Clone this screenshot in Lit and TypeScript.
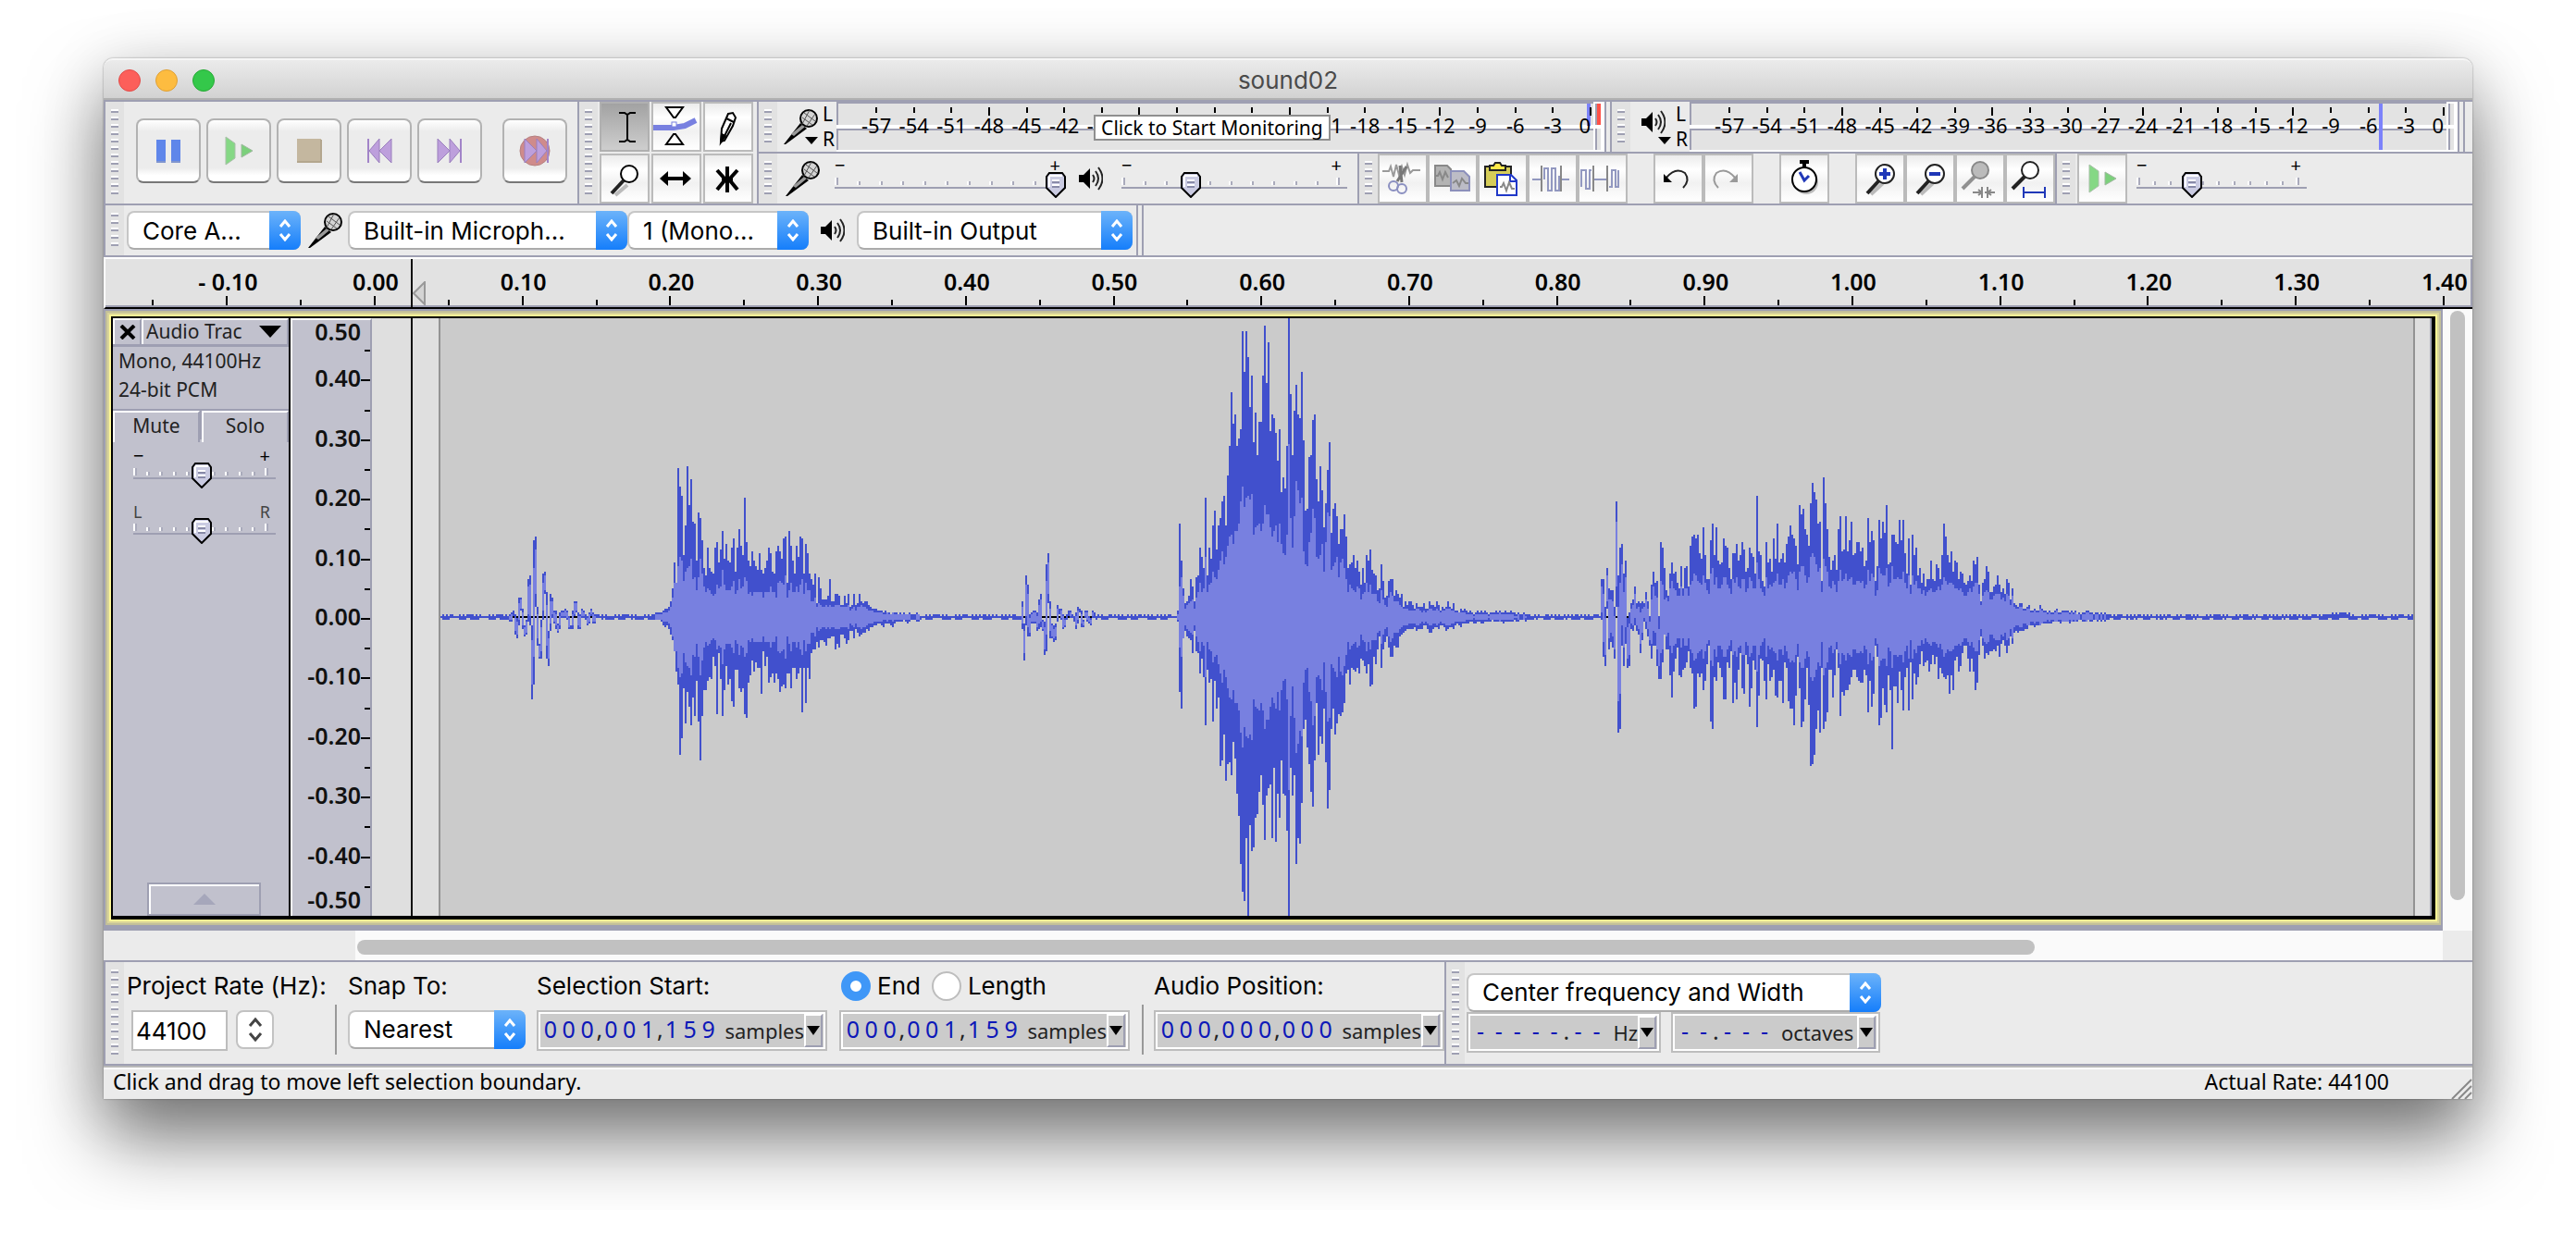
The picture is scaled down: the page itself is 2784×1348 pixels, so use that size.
import { LitElement, html, svg, css, nothing } from "lit";
import { customElement, property } from "lit/decorators.js";

/* ---------- waveform data ---------- */

type Column = { hi: number; lo: number; rhi: number; rlo: number };

const COLUMNS = 1066;
const HALF = 161;

// Oscillating transients: [highest, lowest] value of every column.
const transients: Record<number, number[][]> = {
  37: [[1,-2],[2,-2],[3,1],[1,-9],[-1,-11],[10,-4],[10,4],[4,-6],[-5,-10],[-2,-9],[20,-2],[22,-4],[-5,-44],[41,-36],[43,6],[5,-15],[-15,-22],[-2,-22],[23,-1],[24,13],[13,-22],[-8,-26],[12,-7],[10,0],[3,-3],[3,-6],[-4,-8],[2,-6],[3,0],[3,0],[4,0],[3,-1],[0,-6],[-5,-6],[3,-6],[8,1],[8,3],[2,-6],[1,-6],[4,0],[3,0],[1,-1],[0,-4],[2,-3],[4,1],[2,-3],[1,-3]],
  314: [[8,-6],[-4,-23],[22,-4],[17,-10],[1,-10],[2,-3],[3,-3],[3,-3],[2,-7],[9,-6],[12,-5],[-2,-7],[-3,-20],[28,-18],[34,8],[8,-11],[-4,-11],[-5,-13],[-4,-12],[6,-2],[4,2],[4,-1],[1,-6],[-1,-5],[1,-1],[3,1],[3,0],[1,0],[0,-2],[2,-6],[5,-3],[4,3],[3,-5],[-2,-5],[3,0],[3,-2],[0,-3],[-1,-4],[3,0],[2,0]],
  627: [[20,-1],[20,-21],[5,-26],[26,5],[15,-17],[14,-13],[14,-16],[5,-22],[62,6],[22,-62],[37,-60],[39,-15],[23,-26],[30,-14],[-1,-27],[2,-26],[7,-6],[9,-7],[16,-4],[7,-7],[8,-9],[7,-19],[8,-12],[7,-2],[13,-6],[8,-10],[0,-15],[17,-22],[24,-15],[18,-15],[19,-26],[0,-33]],
};

// Voiced passages: height above the axis, depth below it, and RMS where it is known.
const voiced: { start: number; up: number[]; down: number[]; rms?: number[] }[] = [
  {
    start: 116,
    up: [2,2,2,2,3,4,4,5,8,15,29,18,80,70,65,33,49,81,60,74,51,50,30,56,53,41,26,22,37,26,24,23,37,40,29,36,46,31,39,30,29,37,42,24,37,47,38,33,64,40,30,27,35,30,27,25,34,25,23,26,30,37,34,24,23,35,38,35,31,42,43,18,46,38,30,23,38,32,43,42,23,39,34,23,20,17,23,7,21,15,9,9,9,11,20,8,8,12,12,11,6,6,11,7,12,5,6,12,6,7,12,8,7,8,8,6,5,4,4,4,3,3,3,2,3,2,2,1,2,2,2,1,2,1,2,1,1,2,1,1,1,2,1],
    down: [1,1,1,2,4,5,4,6,9,12,18,29,36,74,65,38,57,40,48,58,43,53,34,56,77,53,39,39,34,32,33,21,26,52,19,33,53,39,26,36,33,45,48,28,28,38,40,38,52,54,35,31,23,29,24,27,27,41,18,26,21,35,32,30,35,30,33,40,37,36,38,30,30,38,27,27,33,30,27,51,27,46,27,33,19,17,17,13,16,12,12,13,15,11,11,10,10,17,14,16,9,9,11,14,12,7,7,11,6,8,10,9,8,8,6,7,5,5,4,4,3,3,4,5,3,3,3,4,5,3,2,2,2,2,1,2,3,2,1,1,1,2,2],
    rms: [1,1,1,1,2,2,2,3,5,10,18,18,27,32,30,19,24,26,27,31,20,21,14,21,31,23,16,13,15,14,12,11,12,17,15,16,25,17,14,14,14,16,19,12,14,20,15,16,21,19,12,13,11,13,13,13,13,13,10,13,13,13,16,13,13,10,18,19,18,17,22,10,14,18,13,13,16,13,17,20,12,18,14,14,8,8,10,5,7,6,5,5,6,5,6,5,5,6,6,6,5,5,5,5,6,3,4,5,3,5,5,6,5,5,4,3,3,3,2,2,2,2,2,1,1,2,1,1,2,1,1,1,1,1,1,1,1,1,1,0,0,1,1],
  },
  {
    start: 398,
    up: [3,50,30,15,7,8,11,20,16,8,21,22,37,32,26,64,22,37,31,49,57,36,49,53,62,65,49,76,92,121,104,109,92,96,101,154,132,154,140,113,130,94,110,87,105,105,130,157,126,148,100,109,107,99,84,101,67,75,69,92,162,120,87,111,125,109,107,132,95,57,58,86,87,106,109,74,62,81,68,48,61,79,94,45,58,61,54,39,47,47,55,43,26,28,29,33,26,30,24,17,26,18,33,30,36,25,23,22,14,15,28,19,10,11,19,20,20,11,14,12,10,12,5,8,6,8,8,6,4,7,5,5,5,7,4,4,8,6,6,5,8,6,3,5,4,5,8,5,4,7,3,3,2,4,3,4,3,2,3,2,1,2,3,2,3,2,3,2,1,2,2,2,3,2,3,2,2,3,2,2,3,2,2,1,2,1,1,2,1],
    down: [2,40,49,11,7,10,11,12,19,7,18,19,30,22,32,58,28,35,33,56,34,49,43,80,77,63,88,79,78,85,67,76,95,107,133,148,153,119,162,112,126,124,108,106,94,85,101,120,96,92,90,119,81,121,95,108,77,95,96,115,162,81,96,85,133,119,122,100,60,55,70,79,94,102,77,46,74,64,68,49,78,103,93,60,49,63,57,52,53,51,46,30,28,36,27,28,29,27,30,22,23,26,30,25,37,36,21,25,17,10,27,17,13,10,16,21,21,15,16,16,10,9,8,7,6,6,6,6,5,7,6,6,6,4,4,6,8,8,6,5,5,6,4,4,5,7,6,5,5,6,4,3,4,5,3,3,3,3,2,2,3,3,2,2,3,3,2,2,2,2,1,2,2,2,2,2,3,2,2,2,2,2,1,2,2,1,1,1,2],
    rms: [1,16,21,11,4,6,7,8,9,4,10,13,18,13,15,32,13,17,18,24,21,20,25,30,35,28,32,38,43,44,39,46,46,50,62,70,59,64,65,63,66,44,48,49,50,46,50,60,55,55,48,43,46,49,40,50,39,34,33,44,93,53,37,54,73,68,61,64,35,28,27,40,45,58,53,32,31,33,39,24,40,56,54,25,27,29,32,21,29,31,26,20,13,17,15,14,13,16,15,9,12,13,18,13,17,12,12,12,8,7,14,9,6,5,10,13,11,8,8,8,6,5,4,4,4,3,3,3,3,4,4,3,2,3,2,3,4,4,3,3,4,3,2,3,3,4,4,4,3,3,2,2,2,2,2,2,1,1,1,1,0,1,1,1,1,1,1,1,0,1,1,1,1,1,2,1,1,1,1,1,1,1,0,0,1,0,0,1,0],
  },
  {
    start: 659,
    up: [40,37,26,14,11,23,29,23,24,18,15,27,15,26,27,16,38,43,44,42,44,34,31,48,33,20,20,41,50,33,48,30,28,29,42,38,37,26,20,34,34,39,30,33,40,36,24,26,37,34,32,23,65,35,33,19,16,40,29,31,24,42,31,50,29,31,34,29,39,43,49,44,42,38,28,60,55,58,47,44,38,61,72,67,63,50,51,19,75,61,47,32,25,30,33,25,47,54,35,36,54,35,41,51,33,34,40,40,35,37,27,30,53,40,46,41,19,27,52,42,51,45,60,28,29,44,44,40,39,52,41,52,34,23,42,17,44,33,37,22,26,18,23,16,20,20,30,20,19,28,26,20,33,50,43,33,29,35,24,30,29,20,24,23,18,17,19,22,19,30,28,32,17,8,18,20,27,24,13,13,16,17,22,17,13,15,12,20,18,9,15,7,6,5,7,7,4,4,5,6,3,3,4,3,3,6,4,3,3,2,3,2,2,3,4,2,2,3,3,3,3,2,3,2,3,1,2,1,2,2,3,3,2,2,1,2,2,1,2,1,2,1,1],
    down: [33,24,9,17,17,31,43,29,22,16,31,32,28,27,24,18,27,30,49,48,30,32,30,39,34,25,15,56,60,32,34,24,27,32,44,44,24,27,18,46,35,44,28,19,38,41,20,25,48,38,23,28,59,42,22,23,34,44,25,34,32,28,42,43,34,34,46,24,27,45,49,49,58,42,21,38,59,56,44,27,47,80,79,74,60,50,62,27,60,56,51,28,28,43,31,17,27,53,40,42,39,39,36,32,28,28,32,34,35,35,28,31,51,34,48,41,15,21,58,54,38,47,51,31,39,71,37,37,46,29,39,50,32,27,50,24,44,30,36,32,25,18,26,24,23,29,25,20,25,21,33,27,30,32,33,31,41,31,39,23,21,29,26,19,15,15,22,29,22,29,39,35,20,10,15,22,19,20,18,18,17,18,15,21,14,12,15,19,15,10,14,8,7,8,7,7,7,6,6,4,4,4,5,4,4,4,3,3,3,3,3,3,2,2,2,2,3,2,2,2,2,3,2,2,2,2,1,1,2,2,2,1,2,2,1,1,2,1,2,1,2,1,1],
  },
];

function buildColumns(): Column[] {
  const columns: Column[] = [];
  for (let i = 0; i < COLUMNS; i++) {
    // quiet background: a thin deterministic ripple
    const h = (i * 7919 + (i >> 2) * 104729) % 97;
    const bump = i > 1018 && i < 1032 ? 1 : 0;
    columns.push({ hi: (h > 48 ? 1 : 0) + bump, lo: h % 5 > 1 ? -1 : 0, rhi: 0, rlo: 1 });
  }
  for (const [start, values] of Object.entries(transients)) {
    values.forEach(([hi, lo], i) => {
      const trim = (hi - lo) * 0.2;
      columns[Number(start) + i] = { hi, lo, rhi: Math.round(hi - trim), rlo: Math.round(lo + trim) };
    });
  }
  for (const part of voiced) {
    part.up.forEach((up, i) => {
      const down = part.down[i] ?? up;
      const rms = part.rms?.[i] ?? Math.round(Math.min(5 + 0.19 * (up + down), up * 0.7, down * 0.8 + 2));
      columns[part.start + i] = { hi: up, lo: -down, rhi: Math.min(rms, up), rlo: -Math.min(rms, down) };
    });
  }
  return columns;
}

const columns = buildColumns();
const bar = (i: number, hi: number, lo: number) => `M${i} ${HALF - hi}h1V${HALF + 1 - lo}h-1z`;
const peakPath = columns.map((c, i) => bar(i, c.hi, c.lo)).join("");
const rmsPath = columns.map((c, i) => (c.rhi >= c.rlo && c.hi - c.lo > 2 ? bar(i, c.rhi, c.rlo) : "")).join("");

/* ---------- icons ---------- */

const draw = (w: number, h: number, body: unknown) =>
  html`<svg class="icon" width=${w} height=${h} viewBox="0 0 ${w} ${h}" aria-hidden="true">${body}</svg>`;

const skipShape = svg`<path d="M3 1v26" stroke="#a284c8" stroke-width="2"/><path d="M15 1v26L4 14zM28 1v26L15 14z" fill="#bd9fdc" stroke="#9a7fbd"/>`;
const icons: Record<string, unknown> = {
  pause: draw(28, 28, svg`<path d="M1 2h10v24H1zM17 2h10v24H17z" fill="#5f86ea"/><path d="M1 26h10M17 26h10" stroke="#7f95cf" stroke-width="2"/>`),
  play: draw(30, 32, svg`<path d="M1 1l10 7v16L1 31z" fill="#85d885" stroke="#a9bfa9"/><path d="M18 9l12 7-12 7z" fill="#7bd07b" stroke="#a0b8a0"/>`),
  stop: draw(28, 28, svg`<path d="M1 1h26v26H1z" fill="#c4b79f"/><path d="M1 26h26V2" fill="none" stroke="#b3a68e" stroke-width="2"/>`),
  prev: draw(30, 28, skipShape),
  next: draw(30, 28, svg`<g transform="translate(30 0) scale(-1 1)">${skipShape}</g>`),
  record: draw(34, 34, svg`<circle cx="17" cy="17" r="16" fill="#cf8b8b" stroke="#b58080"/><g transform="translate(34 3) scale(-1 1)">${skipShape}</g>`),
  select: draw(54, 54, svg`<path d="M21 12h6l3 2 3-2h6M30 14v28M21 43h6l3-2 3 2h6" fill="none" stroke="#000" stroke-width="2"/>`),
  envelope: draw(54, 54, svg`<path d="M0 28h24l12-2 12-6" fill="none" stroke="#7880e0" stroke-width="6"/><path d="M16 6h18l-8 11h-2zM16 46h18l-8-11h-2z" fill="#fff" stroke="#000" stroke-width="2"/><rect x="22" y="22" width="5" height="5" fill="#fff" stroke="#7880e0"/>`),
  draw: draw(54, 54, svg`<path d="M27 13l5-1 3 5-3 9-9 16-4 1 1-14z" fill="#fff" stroke="#000" stroke-width="2"/><path d="M19 44l1-9 4 2zM25 18l8 4M30 23l-7 14" fill="#000" stroke="#000" stroke-width="2"/>`),
  zoom: draw(54, 54, svg`<path d="M27 32L14 43" stroke="#bbb" stroke-width="4" transform="translate(3 2)"/><circle cx="32" cy="22" r="9" fill="#fff" stroke="#000" stroke-width="2"/><path d="M26 29L13 43" stroke="#222" stroke-width="4"/>`),
  shift: draw(54, 54, svg`<path d="M9 27l9-8v6h16v-6l9 8-9 8v-6H18v6z"/>`),
  multi: draw(54, 54, svg`<path d="M26 14v28" stroke="#000" stroke-width="4"/><path d="M15 18l9 10-9 11M37 18l-9 10 9 11M20 28h12" fill="none" stroke="#000" stroke-width="4"/>`),
  mic: draw(38, 40, svg`<path d="M1 39L19 16l7 6L3 39z"/><path d="M9 28l12-10 3 2-12 10z" fill="#999"/><circle cx="28" cy="11" r="9" fill="#d4d4d4" stroke="#000" stroke-width="2"/><path d="M21 10l11 8M23 5l12 9M29 2l-8 15M35 6l-9 13" stroke="#555"/>`),
  speaker: draw(26, 26, svg`<path d="M0 9h5l7-7v22l-7-7H0z"/><path d="M15 9q3 4 0 8M18 5q6 8 0 16M21 1q9 12 0 24" fill="none" stroke="#222" stroke-width="2"/>`),
  cut: draw(54, 54, svg`<path d="M5 19h7l2-5 3 11 3-13 3 11 3-9 3 9 3-11 3 9 3-3h8" fill="none" stroke="#9a9a9a" stroke-width="2"/><path d="M31 14L21 30M24 13l2 18" stroke="#777" stroke-width="3"/><circle cx="17" cy="35" r="5" fill="none" stroke="#8a8fc0" stroke-width="2"/><circle cx="26" cy="38" r="5" fill="none" stroke="#8a8fc0" stroke-width="2"/>`),
  copy: draw(54, 54, svg`<path d="M8 13h13l4 4v18H8z" fill="#b3b3b3" stroke="#888" stroke-width="2"/><path d="M25 19h14l6 6v15H25z" fill="#bcbcc6" stroke="#8c90bb" stroke-width="2"/><path d="M8 24h3l2-4 3 8 3-8 3 6M27 32l4-3 3 6 3-8 4 5h3" fill="none" stroke="#888" stroke-width="2"/>`),
  paste: draw(54, 54, svg`<path d="M8 14h28v22H8z" fill="#d6cd58" stroke="#222" stroke-width="2"/><path d="M13 18h17v-5h-4l-2-3h-5l-2 3h-4z" fill="#ffe94a" stroke="#222" stroke-width="2"/><path d="M21 23h15l6 6v16H21z" fill="#fff" stroke="#2038c8" stroke-width="2"/><path d="M35 23v7h7" fill="none" stroke="#2038c8" stroke-width="2"/><path d="M24 36h2l2-4 3 8 3-9 3 7h3" fill="none" stroke="#888" stroke-width="2"/>`),
  trim: draw(54, 54, svg`<path d="M5 28h11M35 28h10" stroke="#9298c0" stroke-width="2"/><path d="M15 13v28M36 13v28" stroke="#888" stroke-width="2"/><path d="M18 28V16h4v24h4V16h4v24h4V24" fill="none" stroke="#9298c0" stroke-width="2"/>`),
  silence: draw(54, 54, svg`<path d="M17 28h15" stroke="#9298c0" stroke-width="2"/><path d="M17 13v28M32 13v28" stroke="#888" stroke-width="2"/><path d="M4 36V18h5v20h4V18h2M34 36h3V18h4v18h3V18" fill="none" stroke="#9298c0" stroke-width="2"/>`),
  undo: draw(54, 54, svg`<path d="M14 26q10-12 20-5 6 8-2 16" fill="none" stroke="#222" stroke-width="2"/><path d="M11 22v9h9z"/>`),
  redo: draw(54, 54, svg`<path d="M34 26q-10-12-20-5-6 8 2 16" fill="none" stroke="#999" stroke-width="2"/><path d="M37 22v9h-9z" fill="#999"/>`),
  timer: draw(54, 54, svg`<path d="M22 9h10M27 9v6" stroke="#000" stroke-width="4"/><circle cx="29" cy="31" r="13" fill="#bbb"/><circle cx="27" cy="28" r="13" fill="#fff" stroke="#000" stroke-width="2"/><path d="M22 20l5 9 5-5" fill="none" stroke="#2038b8" stroke-width="3"/>`),
  zoomIn: draw(54, 54, svg`<path d="M27 31L14 43" stroke="#bbb" stroke-width="4" transform="translate(3 1)"/><circle cx="32" cy="22" r="10" fill="#fff" stroke="#222" stroke-width="2"/><path d="M26 29L13 43" stroke="#222" stroke-width="4"/><path d="M26 22h12M32 16v12" stroke="#2038b8" stroke-width="4"/>`),
  zoomOut: draw(54, 54, svg`<path d="M27 31L14 43" stroke="#bbb" stroke-width="4" transform="translate(3 1)"/><circle cx="32" cy="22" r="10" fill="#fff" stroke="#222" stroke-width="2"/><path d="M26 29L13 43" stroke="#222" stroke-width="4"/><path d="M26 22h12" stroke="#2038b8" stroke-width="4"/>`),
  fitSelection: draw(54, 54, svg`<circle cx="27" cy="18" r="9" fill="#bbb" stroke="#888" stroke-width="2"/><path d="M21 25L8 38" stroke="#909090" stroke-width="4"/><path d="M19 42h9M32 42h11M29 36v12M35 36v12M25 39l4 3-4 3M39 39l-4 3 4 3" fill="none" stroke="#888" stroke-width="2"/>`),
  fitProject: draw(54, 54, svg`<circle cx="27" cy="18" r="9" fill="#fff" stroke="#222" stroke-width="2"/><path d="M21 25L8 38" stroke="#222" stroke-width="4"/><path d="M20 42h23M20 36v12M43 36v12" stroke="#2038b8" stroke-width="2"/>`),
};

/* ---------- shared styles ---------- */

const base = css`
  * { box-sizing: border-box; }
  button, select, input { font: inherit; color: inherit; margin: 0; }
  .icon { display: block; flex: none; }
  .ui { font-family: Inter, "Liberation Sans", sans-serif; font-size: 26px; line-height: 32px; }
  .small { font-family: "Noto Sans", "DejaVu Sans", sans-serif; font-size: 21px; line-height: 28px; }
`;

/* ---------- drop-down ---------- */

@customElement("au-combo")
class AuCombo extends LitElement {
  @property() value = "";
  @property() label = "";
  static styles = [base, css`
    :host { display: block; }
    .combo { display: grid; height: 42px; }
    select {
      grid-area: 1 / 1; appearance: none; width: 100%; height: 100%; background: #fff;
      border: 2px solid #c6c6c6; border-bottom-color: #ababab; border-radius: 8px;
      padding: 0 34px 0 15px; color: #000; font-family: Inter, "Liberation Sans", sans-serif; font-size: 26px;
    }
    .step {
      grid-area: 1 / 1; justify-self: end; width: 34px; pointer-events: none;
      border-radius: 0 8px 8px 0; background: linear-gradient(#6cb3fa, #157efb);
      display: flex; align-items: center; justify-content: center;
    }
  `];
  render() {
    return html`<div class="combo">
      <select aria-label=${this.label}><option>${this.value}</option></select>
      <span class="step">${draw(16, 24, svg`<path d="M3 8l5-6 5 6M3 16l5 6 5-6" fill="none" stroke="#fff" stroke-width="3"/>`)}</span>
    </div>`;
  }
}

/* ---------- slider ---------- */

@customElement("au-slider")
class AuSlider extends LitElement {
  @property() label = "";
  @property() low = "−";
  @property() high = "+";
  @property({ type: Number }) value = 50;
  static styles = [base, css`
    :host { display: block; }
    .slider { display: grid; grid-template-rows: 14px 28px; }
    .ends {
      display: flex; justify-content: space-between; padding-right: 6px; line-height: 14px;
      font-family: "Noto Sans", sans-serif; font-size: 20px; color: #000;
    }
    .letters { font-size: 18px; color: #444; }
    .scale {
      grid-area: 2 / 1; margin-top: 6px; height: 12px; border-bottom: 2px solid #9e9fb2;
      display: flex; justify-content: space-between; align-items: flex-end; padding: 0 8px 2px 0;
    }
    .tick { width: 4px; height: 4px; border-left: 2px solid #fff; border-right: 2px solid #a9aabb; }
    .tick:first-child, .tick:last-child { height: 8px; }
    input { grid-area: 2 / 1; appearance: none; background: none; width: 100%; height: 28px; }
    input::-webkit-slider-thumb {
      appearance: none; width: 22px; height: 28px; border: 0;
      background: url("data:image/svg+xml,%3Csvg xmlns='http://www.w3.org/2000/svg' viewBox='0 0 22 28'%3E%3Cpath d='M4 1h14l3 4v12l-10 10L1 17V5z' fill='%23cacbe2' stroke='%23000' stroke-width='2'/%3E%3Cpath d='M4 4h14M4 4v12' stroke='%23fff' stroke-width='2'/%3E%3Cpath d='M7 11h8M7 16h8' stroke='%23888aa8' stroke-width='2'/%3E%3Cpath d='M7 9h8M7 14h8' stroke='%23fff' stroke-width='2'/%3E%3C/svg%3E");
    }
  `];
  render() {
    return html`<div class="slider">
      <div class="ends ${this.low === "L" ? "letters" : ""}"><span>${this.low}</span><span>${this.high}</span></div>
      <div class="scale">${Array.from({ length: 11 }, () => html`<span class="tick"></span>`)}</div>
      <input type="range" min="0" max="100" aria-label=${this.label} .value=${String(this.value)} />
    </div>`;
  }
}

/* ---------- level meter ---------- */

@customElement("au-meter")
class AuMeter extends LitElement {
  @property() label = "";
  @property() icon = "mic";
  @property({ type: Number }) mark = 0;
  @property({ type: Boolean }) clipped = false;
  @property() tip = "";
  static styles = [base, css`
    :host { display: block; flex: 1; }
    .meter { display: flex; height: 54px; }
    .source { flex: 0 0 64px; display: flex; gap: 5px; background: none; border: 0; padding: 0 0 0 6px; }
    .glyph { display: grid; width: 38px; height: 54px; }
    .glyph > * { grid-area: 1 / 1; align-self: center; }
    .glyph .high { margin: 0 0 10px 6px; }
    .glyph .drop { align-self: end; justify-self: end; margin-bottom: 8px; }
    .sides { display: grid; font: 21px/27px "Noto Sans", sans-serif; color: #000; text-align: left; }
    .scale { flex: 1; position: relative; display: grid; grid-template-rows: 1fr 1fr; row-gap: 4px; background: #fff; border-top: 2px solid #9e9fb2; padding-bottom: 2px; }
    .channel { background: #e3e3e3; border-left: 2px solid #9e9fb2; }
    .channel + .channel { border-top: 2px solid #9e9fb2; }
    .tick { position: absolute; top: 4px; width: 2px; height: 6px; background: #000; transform: translateX(-50%); }
    .major { height: 9px; }
    .num { position: absolute; top: 9px; transform: translateX(-50%); font: 22px/28px "Noto Sans", sans-serif; color: #000; }
    .peak { position: absolute; top: 0; bottom: 2px; width: 4px; background: #7c82fb; }
    .short { bottom: 28px; }
    .last { transform: translateX(-100%); }
    .tip {
      position: absolute; left: 34%; top: 12px; border: 2px solid #8f8f8f; background: #fff; padding: 0 6px;
      font: 21px/24px "Noto Sans", sans-serif; color: #000; white-space: nowrap;
    }
    .clip { flex: 0 0 12px; display: grid; grid-template-rows: 1fr 1fr; row-gap: 4px; background: #fff; padding: 2px 4px 2px 2px; }
    .clip span { background: #e3e3e3; border-left: 2px solid #9e9fb2; }
    .clip .red { background: #ff5148; }
  `];
  render() {
    const at = (db: number) => `left:${((43 + ((db + 57) * 770) / 57) / 816) * 100}%`;
    const steps = Array.from({ length: 20 }, (_, i) => -57 + i * 3);
    // the tip hides everything between these two levels
    const hidden = (db: number) => this.tip !== "" && db > -39 && db < -21;
    return html`<div class="meter">
      <button class="source" aria-label=${this.label}>
        <span class="glyph">
          <span class=${this.icon === "speaker" ? "high" : ""}>${icons[this.icon]}</span>
          <span class="drop">${draw(14, 8, svg`<path d="M0 0h14L7 8z"/>`)}</span>
        </span>
        <span class="sides"><span>L</span><span>R</span></span>
      </button>
      <div class="scale">
        <span class="channel"></span><span class="channel"></span>
        <span class="peak ${this.mark === 0 ? "short last" : ""}" style=${at(this.mark)}></span>
        ${steps.map((db) => html`<span class="tick ${db % 12 === 0 ? "major" : ""}" style=${at(db)}></span>
          ${hidden(db) ? nothing : html`<span class="num ${db === 0 ? "last" : ""}" style=${at(db)}>${db}</span>`}`)}
        ${this.tip ? html`<span class="tip" role="tooltip">${this.tip}</span>` : nothing}
      </div>
      <div class="clip"><span class=${this.clipped ? "red" : ""}></span><span></span></div>
    </div>`;
  }
}

/* ---------- numeric field ---------- */

@customElement("au-numeric")
class AuNumeric extends LitElement {
  @property() value = "";
  @property() unit = "";
  @property() label = "";
  static styles = [base, css`
    :host { display: block; }
    .field {
      display: flex; align-items: center; height: 44px; border: 2px solid #bdbdbd; padding: 2px 3px;
      background: #cbcbcb; box-shadow: inset 0 0 0 2px #fff;
    }
    .cell { width: 20px; padding-bottom: 5px; text-align: center; color: #0d18b8; font: 25px/32px "Noto Sans", sans-serif; }
    .mark { width: 6px; color: #222; }
    .unit { margin: 0 auto 0 8px; font-size: 22px; color: #222; }
    button { width: 20px; height: 36px; padding: 0; border: 2px solid #9e9fb2; border-top-color: #fff; border-left-color: #fff; background: #cbcbcb; display: grid; place-items: center; }
  `];
  render() {
    return html`<div class="field" role="group" aria-label=${this.label}>
      ${[...this.value].map((ch) => html`<span class="cell ${ch === "," || ch === "." ? "mark" : ""}">${ch}</span>`)}
      <span class="unit small">${this.unit}</span>
      <button aria-label="Format">${draw(14, 10, svg`<path d="M0 0h14L7 10z"/>`)}</button>
    </div>`;
  }
}

/* ---------- application ---------- */

const transport = [["pause", "Pause"], ["play", "Play"], ["stop", "Stop"], ["prev", "Skip to Start"], ["next", "Skip to End"], ["record", "Record"]];
const tools = [["select", "Selection Tool"], ["envelope", "Envelope Tool"], ["draw", "Draw Tool"], ["zoom", "Zoom Tool"], ["shift", "Time Shift Tool"], ["multi", "Multi-Tool"]];
const editGroups = [
  [["cut", "Cut"], ["copy", "Copy"], ["paste", "Paste"], ["trim", "Trim"], ["silence", "Silence"]],
  [["undo", "Undo"], ["redo", "Redo"]],
  [["timer", "Sync-Lock"]],
  [["zoomIn", "Zoom In"], ["zoomOut", "Zoom Out"], ["fitSelection", "Fit Selection"], ["fitProject", "Fit Project"]],
];
const levels = ["0.50", "0.40", "0.30", "0.20", "0.10", "0.00", "-0.10", "-0.20", "-0.30", "-0.40", "-0.50"];

@customElement("app-root")
class AppRoot extends LitElement {
  static styles = [base, css`
    :host { display: block; background: #fff; padding: 63px 112px 120px; color: #000; }
    .window {
      background: #ebebeb; border-radius: 10px 10px 0 0;
      box-shadow: 0 0 2px rgba(0, 0, 0, 0.45), 0 44px 80px rgba(0, 0, 0, 0.5), 0 10px 70px rgba(0, 0, 0, 0.14);
    }
    .title {
      position: relative; display: flex; align-items: center; justify-content: center; height: 47px; color: #4a4a4a;
      border-radius: 10px 10px 0 0; border-top: 2px solid #f6f6f6; border-bottom: 2px solid #9e9fb2;
      background: linear-gradient(#ebebeb, #d2d2d2 95%, #b0b0b0 96%);
    }
    .lights { position: absolute; left: 16px; display: flex; gap: 16px; }
    .light { width: 24px; height: 24px; padding: 0; border: 1px solid #e24b48; border-radius: 50%; background: #fc5f5a; }
    .amber { background: #fdbc40; border-color: #dfa035; }
    .green { background: #34c84a; border-color: #27aa35; }

    .grip { flex: 0 0 20px; background: #e2e2e2; padding: 8px 6px; }
    .grip::before {
      content: ""; display: block; height: 100%;
      background: repeating-linear-gradient(#fff 0 2px, #9e9fb2 2px 4px, transparent 4px 8px);
    }
    .bar { display: flex; border-left: 2px solid #9e9fb2; border-bottom: 2px solid #9e9fb2; }
    .line { flex: 0 0 2px; background: #9e9fb2; }
    .sp4 { flex: 0 0 4px; }
    .sp8 { flex: 0 0 8px; }

    .transport { display: flex; align-items: center; gap: 6px; padding: 0 11px 4px 13px; height: 110px; }
    .transport button {
      width: 70px; height: 70px; padding: 0; display: grid; place-items: center; border-radius: 8px;
      border: 2px solid #b2b2b2; border-bottom-color: #777;
      background: linear-gradient(#fff, #ececec 18%, #ececec 78%, #fff 90%);
    }
    .transport button:last-child { margin-left: 16px; }
    .tools { display: grid; grid-template-columns: repeat(3, 54px); gap: 2px; padding-right: 4px; margin-left: 2px; }
    .tool {
      width: 54px; height: 54px; padding: 0; display: grid; place-items: center; overflow: hidden;
      border: 2px solid #bbb; background: linear-gradient(#ebebeb, #fff 30%, #f1f1f1 60%, #fff);
    }
    .tool .icon { margin: -2px; }
    .tool.on { background: linear-gradient(#a2a2a2, #cecece); border-color: #b0b0b0; }
    .stack { flex: 1; display: grid; grid-template-rows: 54px 54px; row-gap: 2px; background: #9e9fb2; }
    .row { display: flex; background: #ebebeb; }
    .mixer { display: flex; align-items: center; gap: 14px; padding: 0 11px 0 8px; }
    .record-gain { width: 250px; margin-left: 2px; }
    .output-gain { width: 244px; margin-left: 6px; }
    .edit { display: flex; gap: 28px; }
    .edit div { display: flex; }
    .speed { display: flex; align-items: center; gap: 10px; padding-left: 2px; }
    .speed au-slider { width: 184px; }

    .device { display: flex; align-items: center; height: 54px; padding: 0 4px 0 3px; }
    .device .sign { margin: 0 6px 0 7px; }
    .device .speaker { margin: 0 13px; }
    .host { width: 188px; }
    .input { width: 302px; }
    .channels { width: 196px; }
    .output { width: 298px; }

    .timeline { position: relative; height: 56px; background: #e2e2e2; border-top: 2px solid #fff; border-left: 2px solid #fff; border-bottom: 2px solid #000; box-shadow: inset 0 -2px #9e9fb2, inset -2px 0 #9e9fb2; overflow: hidden; }
    .timeline .tick { position: absolute; bottom: 2px; width: 2px; height: 6px; background: #000; }
    .timeline .major { height: 10px; }
    .time { position: absolute; top: 6px; padding-left: 4px; transform: translateX(-50%); font: 600 25px/36px "Noto Sans", sans-serif; white-space: pre; }
    .cursor { position: absolute; top: 0; bottom: 0; width: 2px; background: #111; }
    .flag { position: absolute; bottom: 2px; margin-left: 2px; }

    .stage { display: flex; }
    .tracks { flex: 1; background: #9e9fb2; padding: 8px 8px 12px; }
    .track {
      display: flex; min-height: 652px; border: 2px solid #000; border-width: 2px 4px 4px 2px; background: #c1c1cd;
      box-shadow: 0 0 0 2px #fdf795, 0 0 0 4px #d9d49a, 0 0 0 6px #c2bf99;
    }
    .panel { flex: 0 0 192px; border-right: 2px solid #000; display: flex; flex-direction: column; color: #222; }
    .head { display: flex; height: 31px; border-bottom: 3px solid #9e9fb2; }
    .cellbtn {
      display: flex; align-items: center; justify-content: center; padding: 0; background: #c1c1cd;
      border: 2px solid #9e9fb2; border-top-color: #fff; border-left-color: #fff; border-bottom: 0;
    }
    .close { flex: 0 0 31px; }
    .menu { flex: 1; justify-content: space-between; padding: 0 6px 2px 3px; }
    .info { height: 69px; padding: 0 6px; line-height: 31px; border-bottom: 2px solid #9e9fb2; }
    .toggles { display: grid; grid-template-columns: 1fr 1fr; column-gap: 2px; height: 31px; background: #9e9fb2; padding-bottom: 3px; }
    .toggles .cellbtn { padding-bottom: 4px; }
    .sliders { padding: 11px 14px 0 22px; display: grid; row-gap: 18px; }
    .fold { margin: auto 30px 0 37px; height: 36px; display: grid; place-items: center; background: #c1c1cd; border: 2px solid #9e9fb2; box-shadow: inset 2px 2px #fff; padding: 0; }
    .levels { position: relative; flex: 0 0 88px; border-left: 2px solid #fff; border-top: 2px solid #fff; border-right: 2px solid #9e9fb2; }
    .level { position: absolute; right: 10px; margin-top: -2px; transform: translateY(-50%); font: 600 25px/28px "Noto Sans", sans-serif; color: #111; }
    .edge-top { transform: none; }
    .edge-bottom { transform: translateY(-100%); margin-top: -4px; }
    .levels .tick { position: absolute; right: 0; width: 6px; height: 2px; background: #000; }
    .levels .major { width: 10px; }
    .canvas { position: relative; flex: 1; display: flex; background: #dfdfdf; border-right: 2px solid #9e9fb2; padding: 0 16px 0 72px; }
    .canvas .cursor { left: 42px; }
    .clip { flex: 1; background: #cbcbcb; border: 2px solid #939393; border-width: 0 2px; display: grid; }
    .clip svg { width: 100%; height: 100%; display: block; }
    .vscroll { flex: 0 0 32px; background: #fafafa; padding: 2px 8px 33px; }
    .thumb { height: 100%; border-radius: 8px; background: #c1c1c1; }
    .hscroll { display: flex; height: 34px; border-bottom: 2px solid #9e9fb2; padding: 0 32px 0 272px; }
    .htrack { flex: 1; background: #fafafa; padding: 10px 2px 6px; }
    .htrack .thumb { width: 80.5%; }

    .bottom { height: 112px; }
    .group { display: flex; flex-direction: column; gap: 10px; padding-top: 10px; }
    .group-row { display: flex; height: 44px; }
    .divider { align-self: flex-end; width: 2px; height: 54px; margin-bottom: 10px; background: #999; }
    .rate { margin-left: 3px; width: 225px; white-space: nowrap; }
    .rate .group-row { gap: 9px; padding-left: 5px; }
    .rate input { width: 104px; border: 2px solid #bdbdbd; background: #fff; padding: 0 3px; height: 44px; }
    .spin { width: 41px; height: 42px; padding: 0; display: grid; place-items: center; background: #fff; border: 2px solid #c2c2c2; border-radius: 8px; }
    .snap { width: 192px; margin: 0 12px; }
    .start { width: 314px; }
    .end { width: 314px; margin: 0 13px; }
    .position { width: 314px; margin-left: 11px; }
    .radios { display: flex; gap: 12px; padding-left: 2px; }
    .radios label { display: flex; align-items: center; gap: 7px; }
    .radios input {
      appearance: none; width: 32px; height: 32px; border-radius: 50%; background: #fff; border: 2px solid #bdbdbd;
    }
    .radios input:checked { border: 10px solid #3f97f7; }
    .spectral { padding: 12px 0 0 2px; }
    .spectral .band { width: 448px; }
    .pair { display: flex; gap: 11px; }
    .hz { width: 210px; }
    .oct { width: 226px; }

    .status {
      display: flex; align-items: flex-start; justify-content: space-between; height: 36px; padding-left: 10px;
      border-top: 2px solid #b8b8b8; box-shadow: inset 0 2px #fff; font-size: 23px; line-height: 30px;
    }
    .rate-now { display: flex; align-items: flex-start; gap: 66px; }
    .rate-now .icon { margin-top: 10px; }
  `];

  private tools() {
    return tools.map(([id, name], i) => html`<button class="tool ${i === 0 ? "on" : ""}" aria-label=${name}>${icons[id]}</button>`);
  }

  private timeline() {
    const at = (t: number) => `left:${((290 + t * 1597) / 2558) * 100}%`;
    const marks = Array.from({ length: 32 }, (_, i) => (i - 3) / 20);
    return html`<div class="timeline">
      ${marks.map((t) => {
        const major = Math.round(t * 20) % 2 === 0;
        const text = t < -0.01 ? `- ${Math.abs(t).toFixed(2)}` : Math.abs(t).toFixed(2);
        return html`<span class="tick ${major ? "major" : ""}" style=${at(t)}></span>
          ${major ? html`<span class="time" style=${at(t)}>${text}</span>` : nothing}`;
      })}
      <span class="cursor" style=${at(0.025)}></span>
      <span class="flag" style=${at(0.025)}>${draw(14, 26, svg`<path d="M13 1v24L1 13z" fill="#d4d4d4" stroke="#999" stroke-width="2"/>`)}</span>
    </div>`;
  }

  private levels() {
    const at = (v: number) => `top:${50 - v * 100}%`;
    const ticks = Array.from({ length: 19 }, (_, i) => 0.45 - i * 0.05);
    return html`<div class="levels">
      ${levels.map((text, i) => {
        const edge = i === 0 ? "edge-top" : i === 10 ? "edge-bottom" : "";
        return html`<span class="level ${edge}" style=${at(Number(text))}>${text}</span>`;
      })}
      ${ticks.map((v, i) => html`<span class="tick ${i % 2 ? "major" : ""}" style=${at(v)}></span>`)}
    </div>`;
  }

  render() {
    return html`<div class="window">
      <header class="title ui">
        <div class="lights">
          <button class="light" aria-label="Close"></button>
          <button class="light amber" aria-label="Minimize"></button>
          <button class="light green" aria-label="Zoom"></button>
        </div>
        sound02
      </header>

      <div class="bar">
        <span class="grip"></span>
        <div class="transport">${transport.map(([id, name]) => html`<button aria-label=${name}>${icons[id]}</button>`)}</div>
        <span class="line"></span>
        <span class="grip"></span>
        <div class="tools">${this.tools()}</div>
        <span class="line"></span>
        <div class="stack">
          <div class="row">
            <span class="grip"></span>
            <au-meter label="Recording Level" icon="mic" clipped tip="Click to Start Monitoring"></au-meter>
            <span class="line"></span><span class="sp4"></span><span class="line"></span>
            <span class="grip"></span>
            <au-meter label="Playback Level" icon="speaker" .mark=${-5.2}></au-meter>
            <span class="line"></span><span class="sp4"></span><span class="line"></span><span class="sp8"></span>
          </div>
          <div class="row">
            <span class="grip"></span>
            <div class="mixer">
              ${icons.mic}<au-slider class="record-gain" label="Recording Volume" .value=${100}></au-slider>
              ${icons.speaker}<au-slider class="output-gain" label="Playback Volume" .value=${29}></au-slider>
            </div>
            <span class="line"></span>
            <span class="grip"></span>
            <div class="edit">${editGroups.map((group) => html`<div>${group.map(([id, name]) =>
              html`<button class="tool" aria-label=${name}>${icons[id]}</button>`)}</div>`)}</div>
            <span class="line"></span>
            <span class="grip"></span>
            <div class="speed">
              <button class="tool" aria-label="Play-at-Speed">${icons.play}</button>
              <au-slider label="Playback Speed" .value=${30}></au-slider>
            </div>
          </div>
        </div>
      </div>

      <div class="bar">
        <span class="grip"></span>
        <div class="device">
          <au-combo class="host" label="Audio Host" value="Core A..."></au-combo>
          <span class="sign">${icons.mic}</span>
          <au-combo class="input" label="Recording Device" value="Built-in Microph..."></au-combo>
          <au-combo class="channels" label="Recording Channels" value="1 (Mono..."></au-combo>
          <span class="speaker">${icons.speaker}</span>
          <au-combo class="output" label="Playback Device" value="Built-in Output"></au-combo>
        </div>
        <span class="line"></span><span class="sp4"></span><span class="line"></span>
      </div>

      ${this.timeline()}

      <div class="stage">
        <div class="tracks">
          <div class="track">
            <section class="panel small">
              <div class="head">
                <button class="cellbtn close" aria-label="Close Track">${draw(18, 16, svg`<path d="M2 1l14 14M16 1L2 15" stroke="#000" stroke-width="4"/>`)}</button>
                <button class="cellbtn menu"><span>Audio Trac</span>${draw(24, 13, svg`<path d="M0 0h24L12 13z"/>`)}</button>
              </div>
              <div class="info">Mono, 44100Hz<br />24-bit PCM</div>
              <div class="toggles"><button class="cellbtn">Mute</button><button class="cellbtn">Solo</button></div>
              <div class="sliders">
                <au-slider label="Gain" .value=${48}></au-slider>
                <au-slider label="Pan" low="L" high="R" .value=${48}></au-slider>
              </div>
              <button class="fold" aria-label="Collapse Track">${draw(24, 12, svg`<path d="M0 12h24L12 0z" fill="#a6a7bb"/>`)}</button>
            </section>
            ${this.levels()}
            <div class="canvas">
              <div class="clip">
                <svg viewBox="0 0 ${COLUMNS} 323" preserveAspectRatio="none" shape-rendering="crispEdges" role="img" aria-label="Waveform">
                  <path d="M0 161h${COLUMNS}v1H0z" fill="#000"></path>
                  <path d=${peakPath} fill="#4150cd"></path>
                  <path d=${rmsPath} fill="#7880e0"></path>
                </svg>
              </div>
              <span class="cursor"></span>
            </div>
          </div>
        </div>
        <div class="vscroll"><div class="thumb"></div></div>
      </div>
      <div class="hscroll"><div class="htrack"><div class="thumb"></div></div></div>

      <div class="bar bottom ui">
        <span class="grip"></span>
        <div class="group rate">
          <label for="rate">Project Rate (Hz):</label>
          <div class="group-row">
            <input id="rate" type="text" value="44100" />
            <button class="spin" aria-label="Choose rate">${draw(16, 26, svg`<path d="M2 9l6-7 6 7M2 17l6 7 6-7" fill="none" stroke="#444" stroke-width="3"/>`)}</button>
          </div>
        </div>
        <span class="divider"></span>
        <div class="group snap">
          <span>Snap To:</span>
          <au-combo label="Snap To" value="Nearest"></au-combo>
        </div>
        <div class="group start">
          <span>Selection Start:</span>
          <au-numeric label="Selection Start" value="000,001,159" unit="samples"></au-numeric>
        </div>
        <div class="group end">
          <div class="radios">
            <label><input type="radio" name="sel" checked />End</label>
            <label><input type="radio" name="sel" />Length</label>
          </div>
          <au-numeric label="Selection End" value="000,001,159" unit="samples"></au-numeric>
        </div>
        <span class="divider"></span>
        <div class="group position">
          <span>Audio Position:</span>
          <au-numeric label="Audio Position" value="000,000,000" unit="samples"></au-numeric>
        </div>
        <span class="line"></span>
        <span class="grip"></span>
        <div class="spectral">
          <au-combo class="band" label="Spectral Selection" value="Center frequency and Width"></au-combo>
          <div class="pair">
            <au-numeric class="hz" label="Center frequency" value="-----.--" unit="Hz"></au-numeric>
            <au-numeric class="oct" label="Width" value="--.---" unit="octaves"></au-numeric>
          </div>
        </div>
      </div>

      <footer class="status small">
        <span>Click and drag to move left selection boundary.</span>
        <span class="rate-now">Actual Rate: 44100
          ${draw(24, 24, svg`<path d="M2 24L23 3M9 24L23 10M16 24l7-7" stroke="#888" stroke-width="2"/>`)}
        </span>
      </footer>
    </div>`;
  }
}
